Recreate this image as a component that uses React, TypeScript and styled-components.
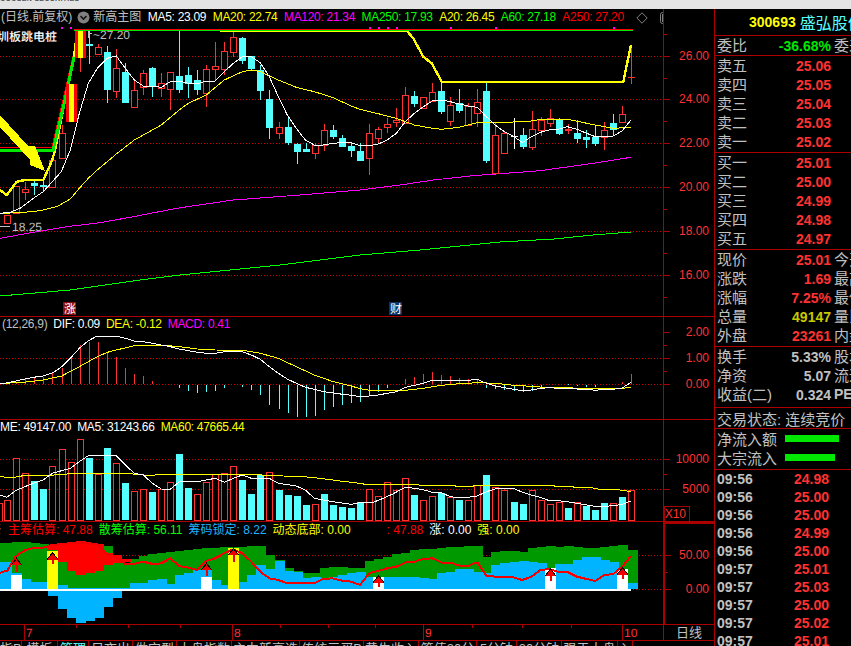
import React from "react";
import styled, { createGlobalStyle } from "styled-components";

const RED = "#ff3232";
const LINE = "#aa0000";
const CYAN = "#54ffff";
const GREY = "#c0c0c0";
const YEL = "#ffff00";
const GRN = "#00e800";
const MAG = "#ff00ff";
const BLUE = "#00b4ff";
const FONT = `"Liberation Sans", "Noto Sans CJK SC", sans-serif`;

const Global = createGlobalStyle`
  html, body { margin: 0; padding: 0; background: #000; overflow: hidden; }
  body { font-family: ${FONT}; }
`;

const Page = styled.div`
  width: 851px; height: 646px; overflow: hidden; background: #000;
  display: flex; flex-direction: column;
`;
const TopBar = styled.div`
  height: 9px; flex: none; background: #e4e4e4; overflow: hidden;
  font-size: 7px; font-weight: 700; line-height: 7px; color: #555; letter-spacing: .3px;
`;
const TopBarText = styled.div`margin-top: -5px;`;
const Body = styled.div`display: flex; flex: 1; min-height: 0;`;
const Charts = styled.div`width: 714px; flex: none; display: flex; flex-direction: column;`;
const Pane = styled.div<{ $h: number }>`
  display: flex; height: ${p => p.$h}px; flex: none; box-sizing: border-box;
  border-bottom: 1px solid ${LINE};
`;
const ChartCol = styled.div`width: 663px; flex: none; display: flex; flex-direction: column; overflow: hidden;`;
const Legend = styled.div<{ $h: number; $pad?: number; $tight?: boolean }>`
  height: ${p => p.$h}px; flex: none; display: flex; align-items: center; gap: 6px;
  padding-left: ${p => p.$pad ?? 0}px; overflow: hidden; white-space: nowrap;
  font-size: 12px; line-height: ${p => p.$h}px;
  letter-spacing: ${p => (p.$tight ? "-0.3px" : "0")};
`;
const LegendItem = styled.span<{ $c: string; $ml?: number }>`
  color: ${p => p.$c}; margin-left: ${p => p.$ml ?? 0}px; flex: none;
`;
const LegendCjk = styled(LegendItem)`letter-spacing: 0;`;
const Clip = styled.div`width: 627px; flex: none; overflow: hidden; display: flex; gap: 6.5px; align-items: center;`;
const RoundIcon = styled.svg`width: 13px; height: 13px; flex: none; margin: 0 -3px 0 -2px; display: block;`;
const EndIcon = styled.svg<{ $ml: number; $w: number }>`
  width: ${p => p.$w}px; height: 12px; flex: none; margin-left: ${p => p.$ml}px; display: block;
`;
const ChartSvg = styled.svg`display: block; width: 663px; flex: 1; min-height: 0; shape-rendering: crispEdges;`;
const Axis = styled.svg<{ $boxed?: boolean }>`
  display: block; width: 51px; flex: none; height: 100%; box-sizing: border-box;
  border-left: ${p => (p.$boxed ? 2 : 1)}px solid ${LINE};
  ${p => p.$boxed && `border-top: 2px solid ${LINE};`}
`;
const AxisLabel = styled.text`
  fill: ${RED}; font-size: 12px; font-family: ${FONT}; text-anchor: end; dominant-baseline: central;
`;
const ChartText = styled.text<{ $c: string; $s: number }>`
  fill: ${p => p.$c}; font-size: ${p => p.$s}px; font-family: ${FONT};
  text-rendering: geometricPrecision;
`;
const DateRow = styled.div`
  display: flex; height: 16px; flex: none; box-sizing: border-box; border-bottom: 1px solid ${LINE};
`;
const DateTrack = styled.svg`display: block; width: 663px; flex: none; height: 100%; shape-rendering: crispEdges;`;
const PeriodCell = styled.div`
  width: 51px; flex: none; box-sizing: border-box; border-left: 1px solid ${LINE};
  color: ${GREY}; font-size: 13px; line-height: 15px; text-align: center;
`;
const TabRow = styled.div`display: flex; height: 16px; flex: none; overflow: hidden;`;
const Tab = styled.div<{ $w: number; $on?: boolean }>`
  width: ${p => p.$w}px; flex: none; box-sizing: border-box; border-right: 1px solid ${LINE};
  color: ${p => (p.$on ? CYAN : GREY)}; font-size: 13px; line-height: 16px; text-align: center;
  overflow: hidden; white-space: nowrap;
`;

const Panel = styled.div`
  width: 137px; flex: none; box-sizing: border-box; border-left: 1px solid ${LINE};
  overflow: hidden; display: flex; flex-direction: column;
`;
const Section = styled.div<{ $h: number; $noLine?: boolean }>`
  height: ${p => p.$h}px; flex: none; box-sizing: border-box;
  border-bottom: ${p => (p.$noLine ? "none" : `1px solid ${LINE}`)};
`;
const StockHead = styled.div`
  display: flex; align-items: center; height: 100%; padding-left: 34px; gap: 4px; white-space: nowrap;
`;
const Code = styled.span`color: ${YEL}; font-size: 14px; font-weight: 700;`;
const Name = styled.span`color: ${CYAN}; font-size: 16px;`;
const Row = styled.div<{ $h?: number }>`
  display: grid; grid-template-columns: 50px 64px 40px; height: ${p => p.$h ?? 19}px;
  padding-left: 2px; align-items: center; white-space: nowrap;
`;
const Label = styled.span`color: ${GREY}; font-size: 15px; line-height: 19px;`;
const Value = styled.span<{ $c: string }>`
  color: ${p => p.$c}; font-size: 14px; font-weight: 700; text-align: right;
`;
const Side = styled.span`color: ${GREY}; font-size: 15px; line-height: 19px; margin-left: 3px;`;
const SideLatin = styled(Side)`font-size: 14px; font-weight: 700;`;
const StatusRow = styled.div`
  height: 100%; padding-left: 2px; display: flex; align-items: center;
  color: ${GREY}; font-size: 15px; white-space: nowrap;
`;
const FlowRow = styled.div`
  display: flex; align-items: center; height: 19px; padding-left: 2px; white-space: nowrap;
`;
const FlowLabel = styled.span`color: ${GREY}; font-size: 15px; width: 68px; flex: none;`;
const FlowBar = styled.i<{ $w: number }>`
  display: block; height: 7px; width: ${p => p.$w}px; background: ${GRN}; flex: none;
`;
const TickRow = styled.div`
  display: grid; grid-template-columns: 50px 62px; height: 18px; padding-left: 2px;
  align-items: center; font-size: 14px; font-weight: 700;
`;
const TickTime = styled.span`color: ${GREY};`;
const TickPrice = styled.span`color: ${RED}; text-align: right;`;

/* ---------- chart data ---------- */
const cx = (i: number) => Math.round(7.3 + 9.04 * i);
type P = number[][];
const pts = (yo: number, a: P, b: P) =>
  [...a.map(([x, y]) => [x / 3, y / 3 + yo]), ...b.map(([x, y]) => [x / 3 + 360, y / 3 + yo])]
    .map(([x, y]) => `${x.toFixed(1)},${y.toFixed(1)}`).join(" ");

// kind, body top, body bottom, wick top, wick bottom
type C = [string, number, number, number, number];
const candles: C[] = [
  ["r",215,223,215,223],["r",186,213,186,213],["r",189,192,182,200],["c",183,186,180,195],["c",185,187,180,192],
  ["r",160,187,160,187],["r",133,158,125,158],["s",84,122,84,122],["s",30,58,30,72],["c",44,45.5,30,64],
  ["r",47,54,44,55],["c",52,90,46,103],["r",68,91,49,98],["c",72,103,63,103],["r",90,107,80,107],
  ["r",73,87,70,95],["c",68,87,67,97],["r",83,88,73,97],["r",72,89,72,110],["c",76,90,31,93],
  ["c",75,84,67,98],["c",80,90,70,95],["r",69,93,65,107],["r",66,69,42,80],["r",51,69,42,75],
  ["r",37,52,31,57],["c",38,61,37,64],["c",56,69,56,70],["c",70,91,65,100],["c",99,128,90,139],
  ["r",127,133,122,139],["c",127,143,118,145],["c",144,152,143,164],["c",149,152,143,152],["r",145,153,143,159],
  ["r",130,145,124,151],["c",130,137,125,139],["c",138,147,135,147],["c",146,151,142,157],["c",151,161,143,161],
  ["r",133,158,124,175],["r",129,138,127,143],["r",124,127,118,133],["r",120,122,108,127],["r",95,123,87,123],
  ["c",96,104,91,107],["r",97,108,97,108],["r",92,101,83,102],["c",91,112,83,114],["r",105,121,97,126],
  ["c",103,111,89,113],["r",106,125,103,126],["r",102,113,89,127],["c",91,161,83,163],["r",135,173,123,173],
  ["r",133,153,132,153],["w",136,136,118,149],["c",135,147,128,149],["r",129,147,111,150],["r",120,130,117,136],
  ["r",118,123,109,127],["c",120,134,118,135],["f",129,131,124,134],["c",133,139,120,143],["c",137,140,130,148],
  ["c",137,144,126,146],["r",130,137,122,150],["c",123,130,114,136],["r",114,122,106,122],["f",77,78,46,84],
];

const ma5 = pts(0,
  [[0,640],[30,637],[60,625],[100,595],[130,575],[157,545],[184,515],[211,450],[238,340],[265,250],[292,205],[322,175],[349,168],[376,205],[403,240],[430,258],[457,258],[484,262],[511,245],[538,243],[565,250],[592,252],[619,243],[646,243],[673,215],[700,190],[727,170],[754,170],[781,188],[808,230],[835,290],[862,345],[889,385],[916,420],[943,435],[970,435],[997,430],[1027,428],[1054,428],[1080,437]],
  [[28,437],[55,432],[82,420],[109,400],[136,365],[163,340],[190,320],[217,303],[244,300],[271,305],[298,312],[325,318],[352,322],[379,350],[406,375],[433,395],[460,408],[487,428],[514,410],[541,397],[568,390],[595,388],[622,380],[651,388],[680,400],[706,410],[733,410],[760,408],[787,392],[813,360]]);
const ma20 = pts(0,
  [[0,640],[60,638],[120,632],[170,620],[211,597],[238,565],[265,535],[292,510],[349,462],[403,420],[484,375],[538,330],[565,310],[619,285],[673,240],[727,215],[754,210],[781,215],[835,240],[889,262],[943,275],[997,292],[1054,318],[1080,328]],
  [[50,340],[109,355],[136,365],[163,375],[217,385],[244,388],[298,382],[352,368],[406,368],[460,366],[514,363],[541,358],[622,358],[706,375],[760,385],[813,382]]);
const ma120 = pts(0,
  [[0,715],[100,697],[200,680],[300,668],[400,650],[530,625],[700,600],[900,585],[1080,570]],
  [[120,555],[220,540],[340,527],[540,512],[700,490],[813,472]]);
const ma250 = "0,296 70,290 140,280 180,275 280,265 360,255 420,250 500,242 554,239 593,235 631,232";
const thick = pts(0,
  [[0,570],[20,585],[50,545],[75,540],[130,540],[157,480],[165,450],[195,300],[222,170],[232,90]],
  [[140,92],[160,115],[190,170],[215,190],[245,245],[790,245],[813,135]]);
const dots = [61, 70, 369, 378, 387, 396, 450, 495, 613];

const macdBars: [number, number][] = [
  [1,245],[2,238],[3,232],[4,230],[5,218],[6,205],[7,175],[8,135],[9,125],[10,125],[11,155],[12,172],[13,205],[14,222],[15,228],[16,243],
  [19,265],[20,272],[21,278],[22,275],[23,272],[24,263],[25,255],[26,262],[27,270],[28,285],[29,315],[30,327],[31,340],[32,350],[33,350],[34,348],[35,330],[36,320],[37,315],[38,308],[39,305],
  [40,288],[41,275],[42,265],[44,237],[45,231],[46,222],[47,216],[48,225],[49,228],[50,234],[51,237],[52,238],
  [53,263],[54,267],[55,270],[56,272],[57,275],[58,272],[59,262],[62,252],[63,258],[64,260],[65,261],[68,245],[69,222],
];
const dif = pts(300,
  [[0,252],[30,247],[60,240],[100,232],[130,228],[160,218],[185,200],[211,175],[238,145],[265,122],[292,108],[322,110],[349,108],[376,115],[403,123],[430,125],[457,130],[484,135],[511,140],[538,147],[565,152],[592,157],[619,160],[646,160],[673,155],[700,153],[727,155],[754,165],[781,178],[808,200],[835,220],[862,237],[889,250],[916,262],[943,268],[970,275],[997,278],[1027,283],[1054,286],[1080,290]],
  [[28,288],[55,285],[82,280],[109,275],[136,262],[163,256],[190,250],[217,241],[325,241],[352,238],[379,250],[406,258],[433,263],[460,268],[487,272],[514,270],[541,265],[568,263],[595,265],[622,265],[651,267],[680,268],[706,271],[733,268],[760,268],[787,264],[813,247]]);
const dea = pts(300,
  [[0,250],[60,248],[130,240],[185,228],[238,200],[292,170],[322,157],[349,150],[403,137],[484,135],[538,140],[592,147],[646,150],[727,151],[781,160],[835,175],[889,200],[943,225],[1000,245],[1054,258],[1080,266]],
  [[28,271],[82,273],[136,271],[190,265],[244,256],[298,251],[352,248],[406,250],[460,256],[514,259],[568,263],[622,263],[680,266],[733,267],[787,265],[813,262]]);

const volTops = [256,130,175,198,222,153,103,142,73,129,176,99,145,204,229,223,231,223,202,117,219,237,202,178,175,153,195,237,180,171,226,240,243,270,268,238,270,276,279,262,
  223,244,202,226,190,240,256,244,233,247,255,256,211,180,217,226,261,267,226,256,268,261,280,262,273,285,265,264,247,226];
const volKinds = "rrrccrrrrcrcrcrrcrrccrrrrrcccrccc" + "crccccc" + "rrrrrcrrcrcrrcrrccrrrrcrcccrcrr";
const volMa5 = pts(415,
  [[0,240],[20,247],[50,225],[100,205],[130,195],[157,175],[211,160],[238,140],[265,122],[349,123],[376,150],[403,175],[430,180],[457,205],[484,222],[511,223],[538,200],[592,200],[619,195],[646,190],[673,202],[700,190],[727,180],[754,190],[808,190],[835,205],[889,213],[916,225],[943,250],[970,255],[1000,260],[1054,268],[1080,263]],
  [[40,262],[70,250],[100,236],[136,217],[163,220],[190,224],[217,232],[244,233],[271,245],[298,248],[325,247],[352,243],[379,230],[406,222],[460,220],[487,232],[514,240],[541,247],[568,257],[595,257],[622,260],[651,265],[680,270],[706,274],[733,274],[760,272],[787,268],[813,258]]);
const volMa60 = pts(415,
  [[0,185],[35,188],[70,182],[150,181],[200,177],[300,175],[390,176],[440,181],[525,178],[740,178],[850,183],[900,184],[960,190],[1020,198],[1080,205]],
  [[15,208],[170,208],[180,211],[285,212],[285,215],[340,215],[340,211],[580,211],[585,214],[640,215],[640,217],[693,218],[720,223],[775,224],[813,230]]);

const green = [68,66,66,68,72,75,72,68,65,68,72,78,110,128,118,108,103,100,97,93,90,87,85,84,81,80,80,78,78,105,120,145,152,158,158,145,142,141,145,145,
  123,118,110,103,98,90,87,87,85,82,80,78,78,110,96,92,92,95,85,80,78,80,78,82,85,85,80,78,75,90];
const blue = [125,160,178,187,187,187,195,205,205,205,205,205,205,205,190,190,180,177,192,165,160,150,150,180,195,190,187,165,135,148,122,152,155,175,170,175,170,165,160,155,
  170,172,170,170,172,172,175,178,160,157,148,148,155,158,135,130,125,122,127,130,145,132,132,120,112,110,120,125,148,188];
const whites: [number, number, number, number][] = [[1,165,115,155],[22,170,130,168],[41,172,167,200],[60,145,147,182],[68,148,143,178]];
const yellows: [number, number, number, number][] = [[5,92,98,133],[25,85,85,125]];
const redBlob: [number, number, number][] = [[5,75,90],[6,70,125],[7,66,152],[8,64,165],[9,70,160],[10,72,152],[11,100,135],[12,105,128],[13,118,125]];
const negative: [number, number][] = [[5,228],[6,268],[7,295],[8,308],[9,302],[10,293],[11,260],[12,235],[13,212],[25,213]];
const chipLine = pts(520,
  [[0,158],[22,152],[46,110],[76,90],[103,83],[130,83],[157,75],[211,70],[238,68],[292,72],[322,102],[349,112],[376,133],[403,132],[430,125],[457,132],[484,130],[511,115],[538,138],[565,143],[592,150],[619,122],[646,115],[673,100],[700,88],[727,100],[754,125],[781,155],[808,175],[835,180],[862,190],[943,190],[970,177],[997,175],[1027,182],[1054,185],[1080,195]],
  [[28,160],[55,152],[82,145],[109,140],[136,127],[163,125],[190,117],[217,115],[244,128],[271,128],[298,137],[325,137],[352,127],[379,167],[406,170],[433,170],[460,172],[487,180],[514,170],[541,150],[568,147],[595,156],[622,156],[651,170],[680,177],[706,183],[733,165],[760,162],[787,140],[813,108]]);

const Dotted = ({ y, x1 = 0, x2 = 663 }: { y: number; x1?: number; x2?: number }) => (
  <line x1={x1} x2={x2} y1={y + 0.5} y2={y + 0.5} stroke="#d00000" strokeWidth={1} strokeDasharray="1 2" />
);
const Line = ({ p, c, w = 1 }: { p: string; c: string; w?: number }) => (
  <polyline points={p} fill="none" stroke={c} strokeWidth={w} />
);

const Candle = ({ d, i }: { d: C; i: number }) => {
  const [k, t, b, wt, wb] = d;
  const x = cx(i);
  if (k === "s") {
    return (
      <g>
        <rect x={x - 5} y={t} width={11} height={b - t} fill="#ff0000" />
        <rect x={x - 2} y={t} width={5} height={b - t} fill={YEL} />
        {wb > b && <line x1={x + 0.5} x2={x + 0.5} y1={b} y2={wb} stroke={RED} />}
      </g>
    );
  }
  if (k === "w") {
    return (
      <g stroke="#fff">
        <line x1={x + 0.5} x2={x + 0.5} y1={wt} y2={wb} />
        <line x1={x - 3} x2={x + 4} y1={t + 0.5} y2={t + 0.5} />
      </g>
    );
  }
  const col = k === "c" ? CYAN : RED;
  return (
    <g>
      <line x1={x + 0.5} x2={x + 0.5} y1={wt} y2={t} stroke={col} />
      <line x1={x + 0.5} x2={x + 0.5} y1={b} y2={wb} stroke={col} />
      {k === "c" && <rect x={x - 3} y={t} width={7} height={Math.max(b - t, 1)} fill={CYAN} />}
      {k === "r" && <rect x={x - 3 + 0.5} y={t + 0.5} width={6} height={b - t} fill="#000" stroke={RED} />}
      {k === "f" && <rect x={x - 3} y={t} width={7} height={Math.max(b - t, 1)} fill={RED} />}
    </g>
  );
};

const PriceChart = () => (
  <ChartSvg viewBox="0 26 663 290">
    {[56, 99, 143, 187, 231, 275].map(y => <Dotted key={y} y={y} />)}
    <Line p={ma250} c="#00ff00" />
    <Line p={ma120} c={MAG} />
    {candles.map((d, i) => (d[0] === "s" ? null : <Candle key={i} d={d} i={i} />))}
    <Line p={ma20} c={YEL} />
    <Line p={ma5} c="#fff" />
    <Line p={thick} c={YEL} w={2.4} />
    <polyline points="0,147 52,147 63,100 73,56" fill="none" stroke="#ff0000" />
    <polyline points="0,150.5 53,150.5 65,100 74,57" fill="none" stroke="#00e800" strokeWidth={3} />
    {candles.map((d, i) => (d[0] === "s" ? <Candle key={i} d={d} i={i} /> : null))}
    <line x1={74} x2={633} y1={29.5} y2={29.5} stroke="#ff0000" />
    <line x1={74} x2={633} y1={30.5} y2={30.5} stroke="#00e800" strokeWidth={1.4} />
    <polygon fill={YEL} points="0,115 28,146 35,146 45,171 30,165 30,160 0,127" />
    {dots.map(x => <rect key={x} x={x} y={27} width={2} height={2} fill={MAG} />)}
    <path d="M88.5 31 V38 M88.5 33 H92" fill="none" stroke={GREY} />
    <ChartText $c={GREY} $s={12} x={93} y={39}>~27.20</ChartText>
    <line x1={0} x2={10} y1={226.5} y2={226.5} stroke={GREY} />
    <ChartText $c={GREY} $s={12} x={12} y={231}>18.25</ChartText>
    <ChartText $c="#fff" $s={12} x={-3} y={41} style={{ fontWeight: 500 }}>圳板跳电桩</ChartText>
    <rect x={63} y={302} width={13} height={13} fill="#8a0c0c" />
    <ChartText $c="#fff" $s={12} x={64} y={313}>涨</ChartText>
    <rect x={389} y={302} width={13} height={13} fill="#0a3468" />
    <ChartText $c="#fff" $s={12} x={390} y={313}>财</ChartText>
  </ChartSvg>
);

const Ticks = ({ major, minor }: { major: number[]; minor: number[] }) => (
  <g stroke={LINE} shapeRendering="crispEdges">
    {major.map(y => <line key={y} x1={0} x2={6} y1={y + 0.5} y2={y + 0.5} />)}
    {minor.map(y => <line key={y} x1={0} x2={3} y1={y + 0.5} y2={y + 0.5} />)}
  </g>
);

const PriceAxis = () => (
  <Axis viewBox="0 9 50 307">
    <Ticks major={[56, 99, 143, 187, 231, 275]} minor={[34, 78, 121, 165, 209, 253, 297]} />
    {[["26.00", 56], ["24.00", 99], ["22.00", 143], ["20.00", 187], ["18.00", 231], ["16.00", 275]].map(([t, y]) => (
      <AxisLabel key={t} x={45} y={y as number}>{t}</AxisLabel>
    ))}
  </Axis>
);

const MacdChart = () => (
  <ChartSvg viewBox="0 332 663 87">
    <Dotted y={358} />
    {macdBars.map(([i, y]) => {
      const top = y / 3 + 300;
      const up = top < 384;
      return (
        <line key={i} x1={cx(i) + 0.5} x2={cx(i) + 0.5}
          y1={up ? top : 385} y2={up ? 384 : top} stroke={up ? RED : CYAN} />
      );
    })}
    <Dotted y={384} />
    <Line p={dea} c={YEL} />
    <Line p={dif} c="#fff" />
  </ChartSvg>
);
const MacdAxis = () => (
  <Axis viewBox="0 317 50 102">
    <Ticks major={[332, 358, 384]} minor={[345, 371]} />
    <AxisLabel x={45} y={332}>2.00</AxisLabel>
    <AxisLabel x={45} y={358}>1.00</AxisLabel>
    <AxisLabel x={45} y={384}>0.00</AxisLabel>
  </Axis>
);

const VolChart = () => (
  <ChartSvg viewBox="0 435 663 86">
    <Dotted y={459} />
    <Dotted y={489} />
    {volTops.map((t, i) => {
      const top = t / 3 + 415;
      const cyan = volKinds[i] === "c";
      const x = cx(i);
      return cyan
        ? <rect key={i} x={x - 3} y={top} width={7} height={520 - top} fill={CYAN} />
        : <rect key={i} x={x - 2.5} y={top + 0.5} width={6} height={520 - top} fill="#000" stroke={RED} />;
    })}
    <rect x={-3} y={503.5} width={5} height={20} fill="#000" stroke={RED} />
    <Line p={volMa60} c={YEL} />
    <Line p={volMa5} c="#fff" />
  </ChartSvg>
);
const VolAxis = () => (
  <Axis viewBox="0 420 50 101">
    <Ticks major={[459, 489]} minor={[474]} />
    <AxisLabel x={45} y={459}>10000</AxisLabel>
    <AxisLabel x={45} y={489}>5000</AxisLabel>
    <rect x={0.5} y={506.5} width={25} height={20} fill="none" stroke={LINE} shapeRendering="crispEdges" />
    <AxisLabel x={22} y={514}>X10</AxisLabel>
  </Axis>
);

const ChipArrow = ({ i, tip, end }: { i: number; tip: number; end: number }) => {
  const x = cx(i) + 0.5;
  const t = tip / 3 + 520;
  const e = end / 3 + 520;
  return (
    <g>
      <polygon points={`${x},${t - 1} ${x - 6},${t + 7} ${x + 6},${t + 7}`} fill="#000" />
      <polygon points={`${x},${t + 1} ${x - 5},${t + 7} ${x + 5},${t + 7}`} fill="#f00000" />
      <rect x={x - 1} y={t + 6} width={2} height={e - t - 6} fill="#f00000" />
    </g>
  );
};

const barX = (i: number) => (i === 0 ? 0 : cx(i) - 4);
const barW = (i: number) => (i === 0 ? cx(0) + 5 : i === 69 ? 11 : 10);

const ChipChart = () => (
  <ChartSvg viewBox="0 538 663 86">
    <Dotted y={555} />
    <Dotted y={589} />
    {green.map((t, i) => (
      <rect key={i} x={barX(i)} y={t / 3 + 520} width={barW(i)} height={589 - t / 3 - 520} fill="#009a00" />
    ))}
    {blue.map((t, i) => (
      <rect key={i} x={barX(i)} y={t / 3 + 520} width={barW(i)} height={589 - t / 3 - 520} fill={BLUE} />
    ))}
    {redBlob.map(([i, t, b]) => (
      <rect key={i} x={cx(i) - 4} y={t / 3 + 520} width={10} height={(b - t) / 3} fill="#ff0000" />
    ))}
    {negative.map(([i, b]) => (
      <rect key={i} x={cx(i) - 4} y={589} width={10} height={b / 3 + 520 - 589} fill={BLUE} />
    ))}
    {whites.map(([i, t]) => (
      <rect key={i} x={cx(i) - 5} y={t / 3 + 520} width={11} height={589 - t / 3 - 520} fill="#fff" />
    ))}
    {yellows.map(([i, t]) => (
      <rect key={i} x={cx(i) - 5} y={t / 3 + 520} width={11} height={590 - t / 3 - 520} fill={YEL} />
    ))}
    <rect x={0} y={589} width={631} height={2} fill="#fff" />
    <Line p={chipLine} c="#f00000" w={2} />
    {whites.map(([i, , a, b]) => <ChipArrow key={i} i={i} tip={a} end={b} />)}
    {yellows.map(([i, , a, b]) => <ChipArrow key={i} i={i} tip={a} end={b} />)}
  </ChartSvg>
);
const ChipAxis = () => (
  <Axis $boxed viewBox="0 524 49 100">
    <Ticks major={[555, 589]} minor={[572]} />
    <AxisLabel x={44} y={555}>50.00</AxisLabel>
    <AxisLabel x={44} y={589}>0.00</AxisLabel>
  </Axis>
);

const Dates = () => (
  <DateTrack viewBox="0 625 663 15">
    {[24, 232, 423, 622].map(x => <line key={x} x1={x + 0.5} x2={x + 0.5} y1={625} y2={640} stroke={LINE} />)}
    {[76, 128, 180, 280, 328, 375, 472, 522, 571].map(x => <line key={x} x1={x + 0.5} x2={x + 0.5} y1={625} y2={628} stroke={LINE} />)}
    <ChartText $c={RED} $s={12} x={26} y={637}>7</ChartText>
    <ChartText $c={RED} $s={12} x={234} y={637}>8</ChartText>
    <ChartText $c={RED} $s={12} x={425} y={637}>9</ChartText>
    <ChartText $c={RED} $s={12} x={624} y={637}>10</ChartText>
  </DateTrack>
);

const tabs: [string, number, boolean?][] = [
  ["指B", 22], ["模板", 36], ["筹理", 31, true], ["日夜出", 44], ["做定型", 44], ["大盘指数", 55], ["主力新高选", 68], ["传统三买B", 64],
  ["黄牛收入", 55], ["筹值30分", 58], ["5分钟", 40], ["30分钟", 45], ["强于大盘", 56], ["入", 15],
];
const sell = [["卖五", "25.06"], ["卖四", "25.05"], ["卖三", "25.04"], ["卖二", "25.03"], ["卖一", "25.02"]];
const buy = [["买一", "25.01"], ["买二", "25.00"], ["买三", "24.99"], ["买四", "24.98"], ["买五", "24.97"]];
const quotes = [
  ["现价", "25.01", RED, "今开"], ["涨跌", "1.69", RED, "最高"], ["涨幅", "7.25%", RED, "最低"],
  ["总量", "49147", "#c8c800", "量比"], ["外盘", "23261", RED, "内盘"],
];
const funds = [["换手", "5.33%", "股本"], ["净资", "5.07", "流通"], ["收益(二)", "0.324", "PE"]];
const trades = [
  ["09:56", "24.98"], ["09:56", "25.00"], ["09:56", "25.00"], ["09:56", "24.99"], ["09:56", "25.00"],
  ["09:57", "25.01"], ["09:57", "25.03"], ["09:57", "25.00"], ["09:57", "25.02"], ["09:57", "25.01"],
];

export default function App() {
  return (
    <Page>
      <Global />
      <TopBar><TopBarText>GUOSEN SECURITIES</TopBarText></TopBar>
      <Body>
        <Charts>
          <Pane $h={308}>
            <ChartCol>
              <Legend $h={17} $pad={1} $tight>
                <Clip>
                  <LegendCjk $c={GREY}>(日线.前复权)</LegendCjk>
                  <RoundIcon viewBox="0 0 13 13">
                    <circle cx="6.5" cy="6.5" r="6" fill="#808080" />
                    <path d="M3.5 5 L6.5 8 L9.5 5" fill="none" stroke="#111" strokeWidth="1.6" />
                  </RoundIcon>
                  <LegendCjk $c={GREY}>新高主图</LegendCjk>
                  <LegendItem $c="#fff">MA5: 23.09</LegendItem>
                  <LegendItem $c={YEL}>MA20: 22.74</LegendItem>
                  <LegendItem $c={MAG}>MA120: 21.34</LegendItem>
                  <LegendItem $c="#00ff00">MA250: 17.93</LegendItem>
                  <LegendItem $c={YEL}>A20: 26.45</LegendItem>
                  <LegendItem $c="#00ff00">A60: 27.18</LegendItem>
                  <LegendItem $c="#ff0000">A250: 27.20</LegendItem>
                </Clip>
                <EndIcon $ml={2} $w={12} viewBox="0 0 12 12">
                  <path d="M6 .8 L11.2 6 L6 11.2 L.8 6 Z" fill="none" stroke="#808080" />
                </EndIcon>
                <EndIcon $ml={6} $w={13} viewBox="0 0 13 12">
                  <rect x=".5" y=".5" width="12" height="11" rx="2" fill="none" stroke="#808080" />
                  <rect x="2" y="2" width="5" height="8" fill="#808080" />
                </EndIcon>
              </Legend>
              <PriceChart />
            </ChartCol>
            <PriceAxis />
          </Pane>
          <Pane $h={103}>
            <ChartCol>
              <Legend $h={15} $pad={2} $tight>
                <LegendItem $c={GREY}>(12,26,9)</LegendItem>
                <LegendItem $c="#fff">DIF: 0.09</LegendItem>
                <LegendItem $c={YEL}>DEA: -0.12</LegendItem>
                <LegendItem $c={MAG}>MACD: 0.41</LegendItem>
              </Legend>
              <MacdChart />
            </ChartCol>
            <MacdAxis />
          </Pane>
          <Pane $h={102}>
            <ChartCol>
              <Legend $h={15} $tight>
                <LegendItem $c="#fff">ME: 49147.00</LegendItem>
                <LegendItem $c="#fff">MA5: 31243.66</LegendItem>
                <LegendItem $c={YEL}>MA60: 47665.44</LegendItem>
              </Legend>
              <VolChart />
            </ChartCol>
            <VolAxis />
          </Pane>
          <Pane $h={103}>
            <ChartCol>
              <Legend $h={16}>
                <LegendItem $c={GREY} $ml={-10}>※</LegendItem>
                <LegendItem $c="#ff0000">主筹估算: 47.88</LegendItem>
                <LegendItem $c="#00ff00">散筹估算: 56.11</LegendItem>
                <LegendItem $c="#1eb4ff">筹码锁定: 8.22</LegendItem>
                <LegendItem $c={YEL}>动态底部: 0.00</LegendItem>
                <LegendItem $c="#ff0000" $ml={30}>: 47.88</LegendItem>
                <LegendItem $c="#fff">涨: 0.00</LegendItem>
                <LegendItem $c={YEL}>强: 0.00</LegendItem>
              </Legend>
              <ChipChart />
            </ChartCol>
            <ChipAxis />
          </Pane>
          <DateRow>
            <Dates />
            <PeriodCell>日线</PeriodCell>
          </DateRow>
          <TabRow>
            {tabs.map(([t, w, on]) => <Tab key={t} $w={w} $on={on}>{t}</Tab>)}
          </TabRow>
        </Charts>
        <Panel>
          <Section $h={27}>
            <StockHead><Code>300693</Code><Name>盛弘股份</Name></StockHead>
          </Section>
          <Section $h={20}>
            <Row><Label>委比</Label><Value $c={GRN}>-36.68%</Value><Side>委差</Side></Row>
          </Section>
          <Section $h={97}>
            {sell.map(([l, v]) => <Row key={l}><Label>{l}</Label><Value $c={RED}>{v}</Value></Row>)}
          </Section>
          <Section $h={97}>
            {buy.map(([l, v]) => <Row key={l}><Label>{l}</Label><Value $c={RED}>{v}</Value></Row>)}
          </Section>
          <Section $h={97}>
            {quotes.map(([l, v, c, s]) => <Row key={l}><Label>{l}</Label><Value $c={c}>{v}</Value><Side>{s}</Side></Row>)}
          </Section>
          <Section $h={61}>
            {funds.map(([l, v, s]) => (
              <Row key={l}>
                <Label>{l}</Label><Value $c={GREY}>{v}</Value>
                {s === "PE" ? <SideLatin>{s}</SideLatin> : <Side>{s}</Side>}
              </Row>
            ))}
          </Section>
          <Section $h={21}><StatusRow>交易状态: 连续竞价</StatusRow></Section>
          <Section $h={41}>
            <FlowRow><FlowLabel>净流入额</FlowLabel><FlowBar $w={54} /></FlowRow>
            <FlowRow><FlowLabel>大宗流入</FlowLabel><FlowBar $w={50} /></FlowRow>
          </Section>
          <Section $h={180} $noLine>
            {trades.map(([t, p], i) => (
              <TickRow key={i}><TickTime>{t}</TickTime><TickPrice>{p}</TickPrice></TickRow>
            ))}
          </Section>
        </Panel>
      </Body>
    </Page>
  );
}
